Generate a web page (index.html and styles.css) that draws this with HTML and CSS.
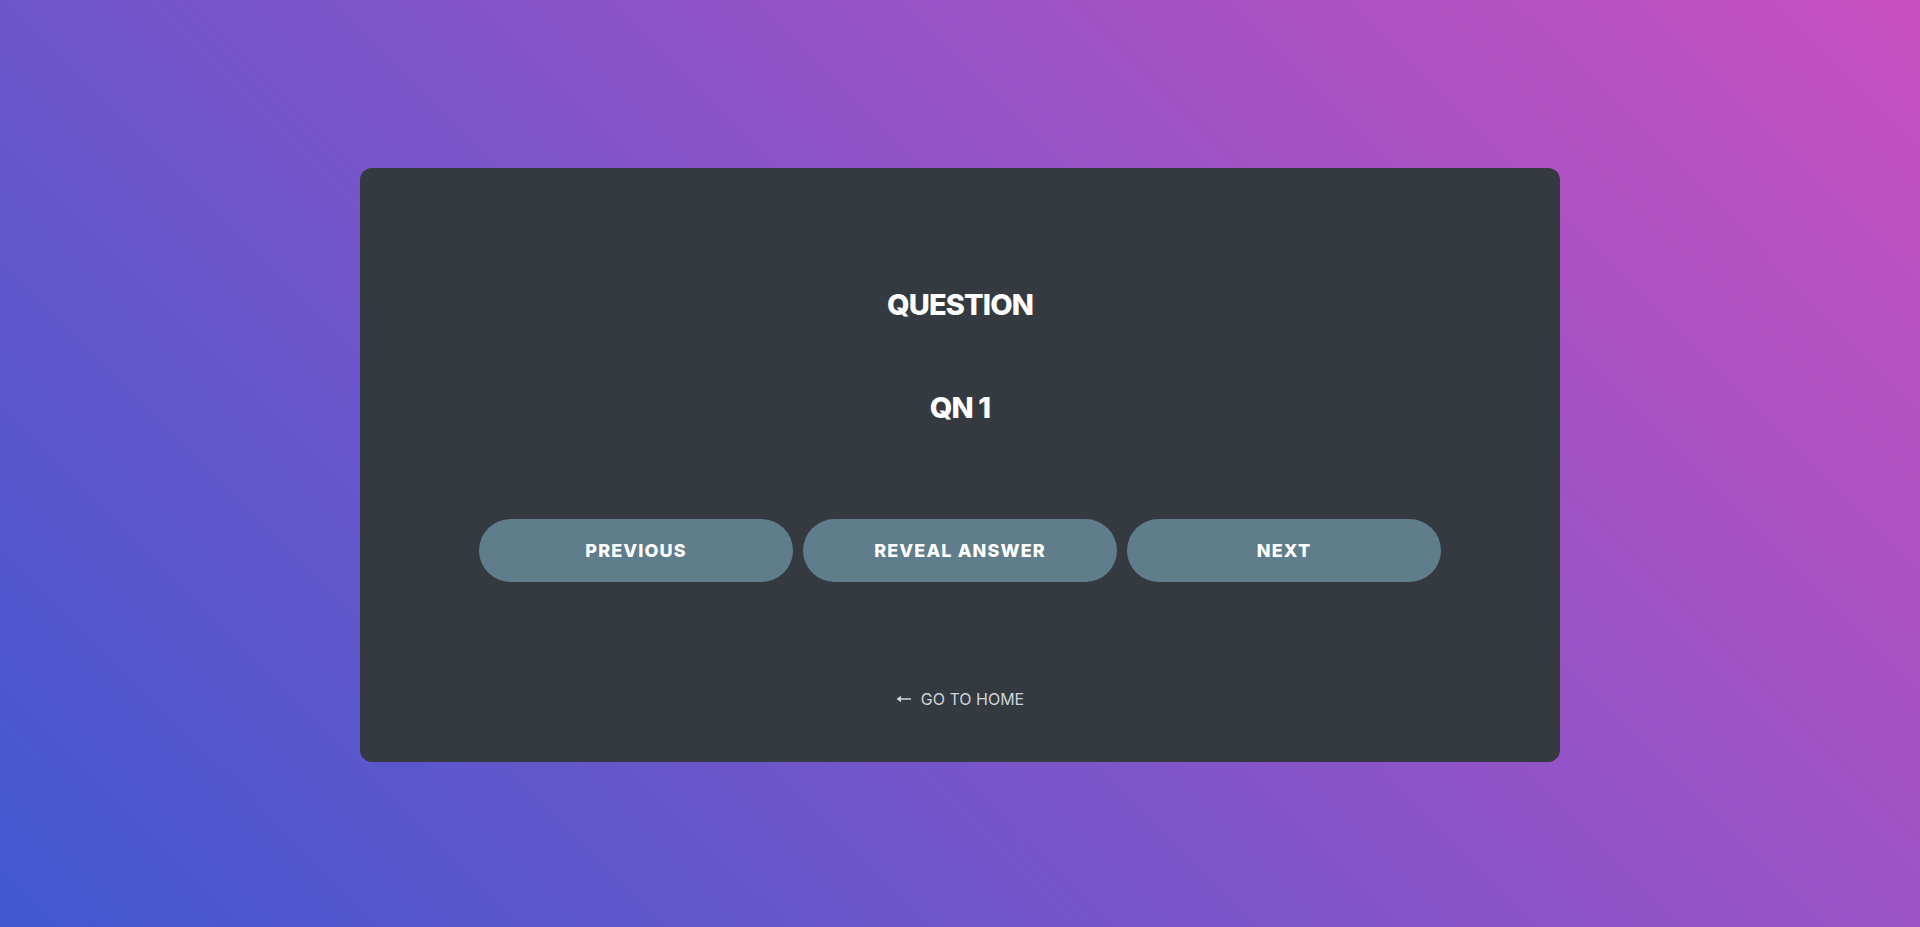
FILE: index.html
```html
<!DOCTYPE html>
<html lang="en">
<head>
<meta charset="utf-8">
<title>Question</title>
<link rel="stylesheet" href="styles.css">
</head>
<body>
<main class="page">
  <section class="card">
    <h2 class="title">QUESTION</h2>
    <p class="question">QN 1</p>
    <div class="actions">
      <button class="btn">PREVIOUS</button>
      <button class="btn">REVEAL ANSWER</button>
      <button class="btn">NEXT</button>
    </div>
    <a class="home" href="#">
      <svg class="arrow" width="15" height="8" viewBox="0 0 15 8" aria-hidden="true"><path d="M0.5 4 L5 0.8 V3.3 H15 V4.7 H5 V7.2 Z" fill="currentColor"/></svg>
      <span>GO TO HOME</span>
    </a>
  </section>
</main>
</body>
</html>
```
FILE: styles.css
```css
html, body {
  margin: 0;
  padding: 0;
  height: 100%;
}
body {
  background: linear-gradient(45deg, #4158d0 0%, #c850c0 100%);
  font-family: "Inter", "Liberation Sans", sans-serif;
}
.page {
  height: 100%;
  display: flex;
  align-items: center;
  justify-content: center;
  padding-top: 3px;
  box-sizing: border-box;
}
.card {
  width: 1200px;
  box-sizing: border-box;
  background: #343a40;
  border-radius: 12px;
  display: flex;
  flex-direction: column;
  align-items: center;
  padding: 117px 0 51px;
}
.title, .question {
  margin: 0;
  color: #fff;
  font-size: 29px;
  line-height: 40px;
  font-weight: 800;
  letter-spacing: -0.9px;
}
.question {
  margin-top: 63px;
}
.actions {
  margin-top: 91px;
  display: flex;
  gap: 10px;
}
.btn {
  width: 314px;
  height: 63px;
  border: 0;
  border-radius: 32px;
  background: #607d8b;
  color: #fff;
  font-family: "Inter", "Liberation Sans", sans-serif;
  font-size: 18px;
  font-weight: 800;
  letter-spacing: 1.1px;
  cursor: pointer;
}
.home {
  margin-top: 105px;
  display: flex;
  align-items: center;
  gap: 10px;
  color: #ced4da;
  text-decoration: none;
  font-size: 16px;
  line-height: 24px;
  font-weight: 400;
}
.arrow {
  display: block;
}
```
